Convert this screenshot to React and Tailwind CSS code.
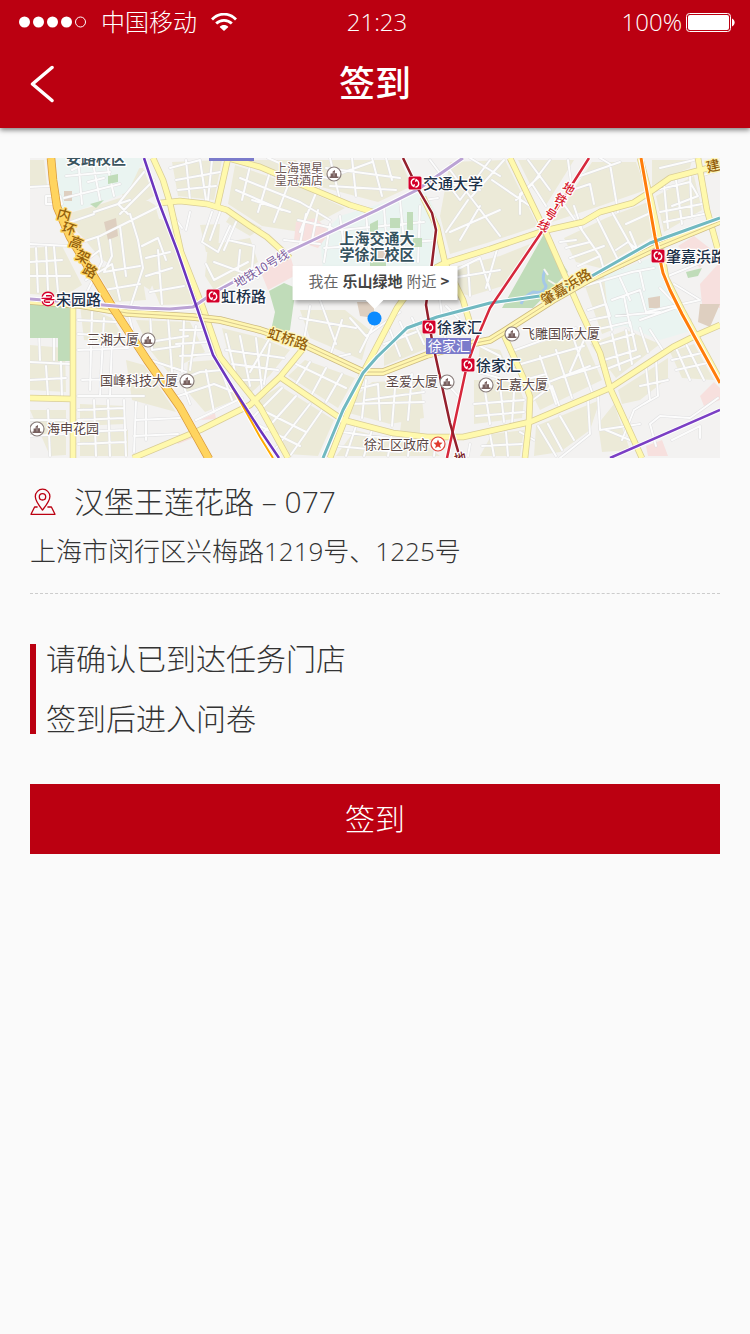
import React from "react";

const FONT = "font-['Open_Sans','Noto_Sans_CJK_SC',sans-serif]";

/* Map geometry lives in one coordinate space: x 30–720, y 158–458. */

const BLOCKS = [
  "M62 215L98 205L135 193L155 205L168 250L150 290L100 258L85 240Z",
  "M30 160L44 160L47 185L30 188Z",
  "M30 248L62 246L82 285L64 296L30 294Z",
  "M95 268L140 262L146 300L115 302Z",
  "M110 170L143 168L154 196L128 212L122 194Z",
  "M150 215L168 222L186 270L196 304L160 305L146 270Z",
  "M172 162L222 160L214 200L178 196Z",
  "M235 165L300 187L345 208L300 232L262 226L228 204Z",
  "M238 160L296 160L305 178L270 170Z",
  "M310 160L400 160L412 186L378 202L310 184Z",
  "M208 245L250 238L258 262L214 290L205 276Z",
  "M232 212L262 228L250 236L226 222Z",
  "M200 225L220 224L218 250L206 252Z",
  "M80 305L112 318L128 345L84 340Z",
  "M136 320L190 322L205 352L168 372L150 350Z",
  "M126 360L144 365L176 412L132 400Z",
  "M80 404L125 406L124 424L80 426Z",
  "M80 434L128 430L128 456L80 456Z",
  "M162 335L186 345L182 372L168 368Z",
  "M30 345L65 348L66 392L30 390Z",
  "M30 410L66 410L66 455L50 456Z",
  "M188 362L214 360L240 398L205 412L186 390Z",
  "M222 328L262 338L290 350L270 375L250 394L232 370Z",
  "M305 360L355 378L338 408L288 376Z",
  "M258 400L280 386L334 420L318 456L288 454Z",
  "M300 310L345 310L370 330L362 360L310 338Z",
  "M350 402L372 382L420 380L424 418L390 424L345 412Z",
  "M402 416L420 416L420 434L400 432Z",
  "M355 430L392 440L424 444L440 456L336 456Z",
  "M410 330L424 330L428 348L384 366L384 350Z",
  "M450 162L505 160L538 226L490 242L450 254L440 216Z",
  "M518 160L574 160L546 205L532 188Z",
  "M592 162L636 162L646 190L600 206L570 216L552 222Z",
  "M606 218L648 202L654 236L600 268L576 262L564 238Z",
  "M656 196L694 176L702 210L664 232Z",
  "M652 160L692 160L690 168L668 176L652 186Z",
  "M450 268L500 256L530 244L506 285L470 296L450 290Z",
  "M585 286L608 274L612 330L602 334Z",
  "M590 344L626 330L660 344L616 378Z",
  "M512 352L580 330L602 380L540 410L530 390Z",
  "M618 390L668 358L668 378L640 400L622 404Z",
  "M670 352L694 344L714 380L682 378Z",
  "M474 380L516 380L524 400L522 418L474 424Z",
  "M536 426L600 400L590 430L560 452L534 456Z",
  "M614 404L630 450L602 452L598 424Z",
  "M492 434L524 430L520 456L480 456Z",
  "M480 346L500 350L510 372L478 362Z",
];

const CAMPUS = [
  "M52 158L144 158L128 192L100 203L62 215L57 190Z",
  "M340 216L425 190L440 220L444 262L420 284L324 284L320 236Z",
  "M604 276L655 256L664 276L694 330L660 340L624 326L610 330Z",
];

const GREENS = [
  "M544 234L568 272L533 308L502 308Z",
  "M269 291L284 283L296 288L293 308L290 330L282 336L272 326L275 312Z",
  "M30 303L70 305L70 361L58 361L58 338L30 338Z",
  "M90 204L104 200L96 208Z",
  "M108 176L118 174L118 182L108 184Z",
  "M370 224L378 220L378 238L370 238Z",
  "M390 218L400 218L400 228L390 228Z",
  "M407 212L413 212L413 230L407 230Z",
  "M413 238L422 238L422 247L413 247Z",
  "M370 262L386 262L386 268L370 268Z",
  "M686 272L702 268L698 276L688 278Z",
];

const PINKS = [
  "M678 246L694 236L712 250L700 268Z",
  "M700 284L720 262L720 308L702 304Z",
  "M700 396L714 382L720 388L720 400L704 406Z",
  "M296 222L316 218L330 232L318 248L294 240Z",
  "M260 270L290 255L296 275L268 290Z",
  "M646 446L662 440L668 456L648 456Z",
  "M175 440L195 430L198 436L178 444Z",
  "M200 420L215 413L216 419Z",
];

const TANS = [
  "M64 191L72 191L72 201L64 201Z",
  "M104 222L116 218L118 236L108 240Z",
  "M648 298L660 296L660 308L649 308Z",
  "M700 304L720 304L710 327L698 322Z",
  "M357 302L374 302L374 318L360 316Z",
  "M378 250L388 250L388 258L378 258Z",
];

const STREETS = [
  "M30 187L50 186M72 170L96 158M66 176L110 172M78 158L82 204M92 158L100 200M106 160L114 196M64 198L88 192L120 184M144 172L118 204L128 214M154 180L120 214M88 182L104 178",
  "M30 244L70 246L100 236L160 206M46 196L60 196L62 204L46 204L46 196M130 214L138 240L143 268L130 308M110 240L112 256L104 272L140 266M98 238L102 262L88 290M120 226L126 276",
  "M62 225L94 214M36 248L38 292M46 247L48 290M54 247L58 292M30 262L62 260M30 276L70 276M84 262L100 250M86 280L112 264L120 300M104 290L140 284M94 212L130 200M142 246L158 238L166 260M146 276L172 268M150 292L184 286M146 258L170 252M158 250L162 304",
  "M170 168L200 160M176 180L220 172M186 160L190 200M200 160L206 200M212 160L208 200M178 190L216 186M172 214L182 228M190 212L186 230",
  "M212 212L202 242L218 252L230 226M220 212L210 240M236 222L224 250M228 240L254 246L252 268M214 262L258 278M240 250L238 270M206 264L214 280L248 262",
  "M240 178L300 202L330 220M250 166L242 200M270 172L258 212M290 180L274 222M318 188L300 232M252 200L290 212M236 190L282 210M268 158L300 172L328 178L372 162M330 158L340 200M352 158L356 196M372 158L382 196M326 168L400 178M330 186L396 190M386 158L392 180",
  "M298 220L332 228M306 214L300 244M318 210L312 240M284 240L320 244M330 224L324 262M340 216L346 262M324 248L440 240M366 212L370 262M384 208L388 262M400 200L406 262M420 206L418 262M340 230L424 222M424 200L438 198",
  "M430 160L460 200L490 160M440 182L480 190M450 170L500 236M468 200L446 232M480 206L460 240M492 180L530 206M450 232L500 210M470 158L500 176M456 270L480 258L490 290M468 264L470 296M440 280L500 270M504 160L472 196M498 246L486 288",
  "M516 200L532 184L546 206M520 214L520 194L540 176M528 160L550 190M550 160L532 184M568 160L572 190L590 184L594 204M600 158L610 164L618 212M580 176L620 162M558 196L600 256L604 270M596 216L622 268M574 206L582 230M612 212L640 262",
  "M566 248L590 242L600 256L578 266M570 258L604 246M560 242L576 240M616 250L628 242L640 252M630 232L640 256M620 262L660 246M626 224L648 214M656 190L690 182L698 196L672 206M664 184L668 228M676 180L682 224M690 176L692 218M660 212L702 204M664 222L704 214M660 168L694 160M700 176L720 170",
  "M584 286L632 272L654 268M600 282L612 330M620 278L630 300M640 272L644 290M612 300L640 290L646 312L700 300M624 296L630 326M640 320L680 306M660 288L690 320M674 284L700 300M616 316L660 312M690 262L720 254M668 276L712 258",
  "M588 310L606 304L610 316L590 320M594 330L630 322L636 350L604 360M600 344L634 334M612 334L620 370M626 330L632 364M640 328L648 352M604 370L640 356M650 330L664 352M676 348L690 380M686 344L704 380M672 360L706 352M676 370L712 362M646 368L650 400L634 410L622 440M656 360L658 396L644 404M640 386L668 380",
  "M510 352L576 328M514 366L584 346M528 390L590 366M540 356L556 404M556 350L572 398M574 340L592 392M524 380L546 374M530 402L552 386L560 408M584 340L570 372M566 376L600 366M588 400L590 434L560 458M598 396L600 430L640 424M538 426L556 456M548 424L562 450M560 416L574 440M606 430L630 440M650 424L660 416L690 418L718 398M650 424L656 446M672 440L700 426L700 438M534 440L520 432",
  "M480 346L500 356L506 372M478 372L520 384M484 384L490 424M500 384L504 422M474 404L524 400M476 416L524 412M514 392L512 424M490 434L494 456M506 432L508 456M482 446L522 444",
  "M30 362L70 364M38 305L40 360M54 310L54 360M30 320L66 318M60 336L62 396M30 380L66 378M46 366L48 396M78 320L116 322M78 334L120 336M92 312L90 390M104 318L100 396M112 340L110 396M82 380L130 378M78 350L128 348M78 396L144 396",
  "M78 410L124 408M78 420L124 418M78 432L126 430M78 444L126 442M94 400L96 456M108 400L110 456M124 400L126 456M136 402L134 452M146 406L146 440M30 420L66 420M30 436L66 434M48 410L50 456M136 420L180 418M134 436L178 434",
  "M128 312L136 344L188 336M150 312L152 350L180 346M168 316L172 372M184 320L182 372M196 326L190 370M150 360L186 372M170 384L200 372L222 370M178 396L214 384L234 392M190 404L180 376M206 370L214 412M222 372L232 400M196 420L242 398M180 330L206 330M176 344L208 342M180 356L212 354",
  "M226 334L236 376M240 336L250 386M256 338L262 390M270 344L264 384M226 350L284 358M232 364L278 370M236 380L262 380M292 300L250 372M320 300L336 344M300 318L356 328M310 306L304 340M342 320L330 356M350 318L366 336L400 312M376 320L360 352",
  "M296 364L346 388M310 362L296 384M326 368L312 394M342 374L326 402M282 388L254 416M296 396L264 432M310 404L276 448M322 410L290 456M262 410L306 432M256 424L300 446M350 354L332 358M352 390L378 384L380 420M348 404L424 402M366 380L362 418M396 376L392 426M412 374L408 420M366 400L424 392",
  "M342 432L430 444M356 426L346 456M372 430L364 456M392 434L388 456M410 438L408 456M336 446L400 452M384 344L416 332M390 330L400 356M400 322L412 350M412 318L424 344M440 300L446 344M446 306L458 318M440 376L460 398M436 440L434 456M470 444L468 456",
];

const YELLOW = [
  "M153 158L163 180L170 203L181 252L203 308L220 357L260 407L288 458",
  "M160 203L180 201L207 204L227 210L250 226L267 237L290 258",
  "M228 158L217 207",
  "M228 158L260 167L307 187L350 205L373 212",
  "M423 197L437 227L445 263L463 300L472 330",
  "M330 458L363 373L397 308L420 276L445 263L490 249L543 231L583 222L600 212L633 203L650 192L670 178L720 165",
  "M510 158L547 235L580 310L600 353L610 388L642 458",
  "M280 377L343 420L393 433L427 437L463 437L490 431L530 422L610 388L673 347L697 335L720 325",
  "M302 350L280 377L250 405L200 430L133 458",
  "M73 303L73 458",
  "M30 398L73 399",
  "M503 333L523 377L530 397L529 422L525 458",
  "M698 158L707 210L718 250",
  "M640 158L651 200L660 243L666 278L682 310L720 380",
];

const DOUBLE = [
  "M30 301L80 305L127 313L193 317L220 320L260 330L305 345L363 372L383 372L427 355L460 346L490 340L503 332L553 300L590 279L657 247L720 221",
];

const METRO = [
  { d: "M30 299L70 302L103 305L140 308L170 309L193 307L215 292L250 273L290 251L377 210L417 190L463 158", c: "#bba3d4", w: 3 },
  { d: "M230 383L260 437L273 458", c: "#ffab00", w: 2 },
  { d: "M144 158L158 200L177 250L197 308L213 355L233 388L260 430L279 458", c: "#6b35bd", w: 2.5 },
  { d: "M610 458L720 410", c: "#7b3fc4", w: 2.5 },
  { d: "M323 458L343 410L363 373L377 357L407 328L437 317L490 303L547 295L590 277L650 243L720 218", c: "#71b9c1", w: 3 },
  { d: "M641 158L655 237L663 273L670 290L682 314L720 383", c: "#ff7d0a", w: 3 },
  { d: "M589 158L543 230L490 308L475 343L467 365L447 458", c: "#d6283c", w: 2.5 },
  { d: "M403 158L417 187L432 213L436 230L432 263L426 305L432 340L450 423L460 458", c: "#94202c", w: 2.5 },
];

const STATIONS = [
  { x: 415, y: 183, t: "交通大学" },
  { x: 213, y: 296, t: "虹桥路" },
  { x: 658, y: 256, t: "肇嘉浜路" },
  { x: 429, y: 327, t: "徐家汇" },
  { x: 468, y: 365, t: "徐家汇" },
];

const PLACES = [
  { x: 148, y: 340, t: "三湘大厦", side: "left" },
  { x: 187, y: 381, t: "国峰科技大厦", side: "left" },
  { x: 447, y: 382, t: "圣爱大厦", side: "left" },
  { x: 37, y: 429, t: "海申花园", side: "right" },
  { x: 512, y: 334, t: "飞雕国际大厦", side: "right" },
  { x: 486, y: 385, t: "汇嘉大厦", side: "right" },
];

const ROAD_NAMES = [
  { t: "内", x: 64, y: 215, r: 15, c: "#93600c", h: "#ffd76a" },
  { t: "环", x: 69, y: 229, r: 18, c: "#93600c", h: "#ffd76a" },
  { t: "高", x: 76, y: 243, r: 22, c: "#93600c", h: "#ffd76a" },
  { t: "架", x: 83, y: 257, r: 25, c: "#93600c", h: "#ffd76a" },
  { t: "路", x: 90, y: 271, r: 28, c: "#93600c", h: "#ffd76a" },
  { t: "虹桥路", x: 288, y: 339, r: 18, c: "#93600c", h: "#fff6b5" },
  { t: "肇嘉浜路", x: 566, y: 287, r: -31, c: "#93600c", h: "#fff6b5" },
  { t: "建", x: 713, y: 166, r: -14, c: "#93600c", h: "#fff6b5" },
  { t: "地铁10号线", x: 261, y: 268, r: -31, c: "#7a5c9b", h: "#ffffff" },
  { t: "地", x: 569, y: 188, r: 32, c: "#d6182d", h: "#ffffff" },
  { t: "铁", x: 561, y: 199, r: 32, c: "#d6182d", h: "#ffffff" },
  { t: "1", x: 556, y: 207, r: 32, c: "#d6182d", h: "#ffffff" },
  { t: "号", x: 551, y: 214, r: 32, c: "#d6182d", h: "#ffffff" },
  { t: "线", x: 544, y: 225, r: 32, c: "#d6182d", h: "#ffffff" },
  { t: "地", x: 460, y: 457, r: -12, c: "#7a1a25", h: "#ffffff" },
];

function Label({ x, y, size = 12, fill, halo = "#ffffff", weight = 400, anchor = "start", children }) {
  return (
    <text
      x={x}
      y={y}
      fontSize={size}
      fontWeight={weight}
      fill={fill}
      stroke={halo}
      strokeWidth="2.5"
      strokeLinejoin="round"
      paintOrder="stroke"
      textAnchor={anchor}
    >
      {children}
    </text>
  );
}

function Roads({ paths, width, casing, fill }) {
  return (
    <g fill="none" strokeLinejoin="round">
      {paths.map((d) => (
        <path key={"c" + d} d={d} stroke={casing} strokeWidth={width + 1.5} />
      ))}
      {paths.map((d) => (
        <path key={"f" + d} d={d} stroke={fill} strokeWidth={width} />
      ))}
    </g>
  );
}

function StationMark({ x, y }) {
  return (
    <g transform={`translate(${x} ${y})`}>
      <rect x="-7" y="-7" width="14" height="14" rx="2" fill="#fff" />
      <rect x="-6.5" y="-6.5" width="13" height="13" rx="1.5" fill="#d4002a" />
      <path d="M-.4-4.2C-3-3.6-4-1.6-3.6.4-3.3 1.9-2.4 2.8-1.2 3.4L-.6 1.2M.4 4.2C3 3.6 4 1.6 3.6-.4 3.3-1.9 2.4-2.8 1.2-3.4L.6-1.2" fill="none" stroke="#fff" strokeWidth="1.4" />
    </g>
  );
}

function PlaceMark({ x, y }) {
  return (
    <g transform={`translate(${x} ${y})`}>
      <circle r="7" fill="#fff" stroke="#8a7e7c" strokeWidth="1.2" />
      <path d="M-4.5 4V2.6H-3.4V-.6H-1.4V-2.6L1-4V-.8H3V2.6H4.5V4Z" fill="#78605f" />
      <path d="M0-2V2.5" stroke="#d8cfcd" strokeWidth=".6" />
    </g>
  );
}

function CityMap() {
  return (
    <svg viewBox="30 158 690 300" className="block h-full w-full font-['Noto_Sans_CJK_SC',sans-serif]" role="img" aria-label="地图">
      <rect x="30" y="158" width="690" height="300" fill="#f3f2f1" />
      <path d={BLOCKS.join("")} fill="#ecead8" />
      <path d={CAMPUS.join("")} fill="#eaf4f1" />
      <path d={PINKS.join("")} fill="#f7e0de" />
      <path d={TANS.join("")} fill="#decfc0" />
      <g fill="none" strokeLinejoin="round" strokeLinecap="round">
        <path d={STREETS.join("")} stroke="#dfdfe0" strokeWidth="3" />
        <path d={STREETS.join("")} stroke="#fcfcfc" strokeWidth="2" />
      </g>
      <path d={GREENS.join("")} fill="#c0dcb9" />
      <path d="M545 270Q541 280 546 286Q545 294 533 292Q524 296 521 304" fill="none" stroke="#a5c8e8" strokeWidth="3" />
      <path d="M544 269L548 275M548 280L558 286L566 284" fill="none" stroke="#f4f4f0" strokeWidth="2" />

      <Roads paths={YELLOW} width={5} casing="#d9cd96" fill="#fff9ad" />
      <Roads paths={DOUBLE} width={6} casing="#cdbb80" fill="#fff6b0" />
      <path d={DOUBLE[0]} fill="none" stroke="#d9c98c" strokeWidth="1" />
      <Roads
        paths={["M51 158L53 180L57 207L70 237L90 270L113 308L147 360L180 407L209 459"]}
        width={7}
        casing="#d99a3c"
        fill="#ffd45f"
      />

      <g fill="none" strokeLinejoin="round">
        {METRO.map((m) => (
          <path key={"h" + m.d} d={m.d} stroke="#ffffff" strokeWidth={m.w + 2} />
        ))}
        {METRO.map((m) => (
          <path key={m.d} d={m.d} stroke={m.c} strokeWidth={m.w} />
        ))}
      </g>

      {ROAD_NAMES.map((n, i) => (
        <g key={i} transform={`translate(${n.x} ${n.y}) rotate(${n.r})`}>
          <Label x={0} y={5} size={n.c === "#93600c" ? 14 : 12} weight={n.c === "#7a5c9b" ? 400 : 500} fill={n.c} halo={n.h} anchor="middle">
            {n.t}
          </Label>
        </g>
      ))}

      <Label x={96} y={164} size={15} weight={700} fill="#3b5560" anchor="middle">安路校区</Label>
      <rect x="209" y="150" width="45" height="11" fill="#7b7bcb" />

      <Label x={299} y={173} fill="#6b5654" anchor="middle">上海银星</Label>
      <Label x={299} y={185} fill="#6b5654" anchor="middle">皇冠酒店</Label>
      <PlaceMark x={334} y={174} />

      <Label x={377} y={244} size={15} weight={700} fill="#35525e" anchor="middle">上海交通大</Label>
      <Label x={377} y={260} size={15} weight={700} fill="#35525e" anchor="middle">学徐汇校区</Label>

      <g transform="translate(48 299)" fill="none">
        <circle r="7.5" fill="#fff" />
        <path d="M5.9-2.4A6.2 6.2 0 0 0-5.900-2.4M-5.900 2.400A6.2 6.2 0 0 0 5.900 2.400M-6.500-.6H1.500Q3.600-.6 3.600-2.100T1.600-3.300H-2M6.500.6H-1.500Q-3.600.6-3.600 2T-1.600 3.300H2" stroke="#d4002a" strokeWidth="1.4" />
      </g>
      <Label x={56} y={305} size={15} weight={500} fill="#1c3048">宋园路</Label>

      {STATIONS.map((s, i) => (
        <g key={i}>
          <Label x={s.x + 8} y={s.y + 6} size={15} weight={500} fill="#1c3048">{s.t}</Label>
          <StationMark x={s.x} y={s.y} />
        </g>
      ))}

      <rect x="426" y="338" width="45" height="16" fill="#7b7bcb" />
      <text x="449" y="351" fontSize="14" fill="#fff" textAnchor="middle">徐家汇</text>

      {PLACES.map((p) => (
        <g key={p.t}>
          <Label
            x={p.side === "left" ? p.x - 9 : p.x + 10}
            y={p.y + 4}
            size={13}
            fill="#5a4745"
            anchor={p.side === "left" ? "end" : "start"}
          >
            {p.t}
          </Label>
          <PlaceMark x={p.x} y={p.y} />
        </g>
      ))}

      <Label x={429} y={449} size={13} fill="#5a4745" anchor="end">徐汇区政府</Label>
      <circle cx="438" cy="444" r="7" fill="#fff" stroke="#e0453c" strokeWidth="1.2" />
      <path d="M438 439.4L439.3 442.6L442.6 442.8L440 445L440.9 448.2L438 446.4L435.1 448.2L436 445L433.4 442.8L436.7 442.6Z" fill="#e0392f" />

      <circle cx="374.5" cy="318.5" r="7" fill="#0c8bff" />
    </svg>
  );
}

function StatusBar() {
  return (
    <div className="grid h-10 grid-cols-[1fr_auto_1fr] items-center pt-1 pr-[15px] pl-[19px] text-2xl font-light">
      <div className="flex items-center">
        <svg viewBox="0 0 68 12" className="h-3 w-[68px]" aria-hidden="true">
          <g fill="#fff">
            <circle cx="5.5" cy="6" r="5.5" />
            <circle cx="19.5" cy="6" r="5.5" />
            <circle cx="33.5" cy="6" r="5.5" />
            <circle cx="47.5" cy="6" r="5.5" />
          </g>
          <circle cx="61.5" cy="6" r="5" fill="none" stroke="#fff" strokeWidth="1" />
        </svg>
        <span className="ml-[14px] leading-8">中国移动</span>
        <svg viewBox="0 0 26 18" className="ml-[14px] h-[18px] w-[26px]" aria-hidden="true">
          <g fill="none" stroke="#fff" strokeWidth="2.8">
            <path d="M1 6.4C8-.6 18-.6 25 6.4" />
            <path d="M5.2 10.6C9.6 6.2 16.4 6.2 20.8 10.6" />
          </g>
          <path d="M8.6 13.9C11 11.5 15 11.5 17.4 13.9L13 18Z" fill="#fff" />
        </svg>
      </div>
      <span className="leading-8">21:23</span>
      <div className="flex items-center justify-end gap-1">
        <span className="leading-8">100%</span>
        <svg viewBox="0 0 49 19" className="h-[19px] w-[49px]" aria-hidden="true">
          <rect x=".5" y=".5" width="44" height="18" rx="3" fill="none" stroke="#fff" />
          <rect x="2" y="2" width="41" height="15" rx="2" fill="#fff" />
          <path d="M46 5.5C49.5 7 49.5 12 46 13.5Z" fill="#fff" />
        </svg>
      </div>
    </div>
  );
}

export default function App() {
  return (
    <div className={`min-h-screen bg-[#fafafa] text-[#333333] ${FONT}`}>
      <header className="relative bg-[#bb0011] text-white shadow-[0_2px_5px_rgba(0,0,0,0.5)]">
        <StatusBar />
        <div className="grid h-[88px] grid-cols-[1fr_auto_1fr] items-center px-[30px]">
          <button type="button" aria-label="返回" className="flex h-12 w-12 items-center">
            <svg viewBox="0 0 24 38" className="h-[38px] w-6" aria-hidden="true">
              <path d="M22 2.5L2.5 19L22 35.5" fill="none" stroke="#fff" strokeWidth="3.5" strokeLinecap="round" strokeLinejoin="round" />
            </svg>
          </button>
          <h1 className="text-4xl font-medium">签到</h1>
        </div>
      </header>

      <main className="px-[30px] pt-[30px]">
        <div className="relative aspect-[690/300] overflow-hidden">
          <CityMap />
          <button
            type="button"
            className="absolute top-[36%] left-1/2 flex h-[34px] -translate-x-1/2 items-center justify-center gap-1 bg-white pr-2 pb-1 pl-4 font-['Noto_Sans_CJK_SC',sans-serif] text-[15px] whitespace-nowrap text-[#666666] shadow-[2px_3px_4px_rgba(0,0,0,0.3)]"
          >
            <span>我在</span>
            <span className="font-bold text-[#444444]">乐山绿地</span>
            <span>附近</span>
            <span className="font-bold text-[#444444]">&gt;</span>
            <svg viewBox="0 0 18 9" className="absolute top-full left-1/2 h-[9px] w-[18px] -translate-x-1/2" aria-hidden="true">
              <path d="M0 0H18L9 9Z" fill="#fff" />
            </svg>
          </button>
        </div>

        <section className="border-b border-dashed border-[#cccccc] pt-6 pb-6">
          <div className="flex items-center gap-[18px]">
            <svg viewBox="0 0 26 28" className="h-7 w-[26px]" fill="none" stroke="#bb0011" strokeWidth="1.3" strokeLinejoin="round" aria-hidden="true">
              <path d="M12.5 22C9 17.5 5.3 13 5.3 8.5A7.3 7.3 0 0 1 19.9 8.5C19.9 13 16 17.5 12.5 22Z" />
              <circle cx="12.5" cy="8.8" r="3.2" />
              <path d="M7.6 19H4.6L1 26.3H25L21.4 19H17.4" />
            </svg>
            <h2 className="text-3xl leading-10 font-light">汉堡王莲花路 – 077</h2>
          </div>
          <p className="mt-[11px] text-[26px] leading-9 font-light">上海市闵行区兴梅路1219号、1225号</p>
        </section>

        <div className="mt-[50px] flex flex-col gap-[30px] border-l-[6px] border-[#bb0011] pl-[10px] text-3xl font-light">
          <p className="leading-[30px]">请确认已到达任务门店</p>
          <p className="leading-[30px]">签到后进入问卷</p>
        </div>

        <button type="button" className="mt-[50px] h-[70px] w-full bg-[#bb0011] text-3xl font-light text-white">
          签到
        </button>
      </main>
    </div>
  );
}
